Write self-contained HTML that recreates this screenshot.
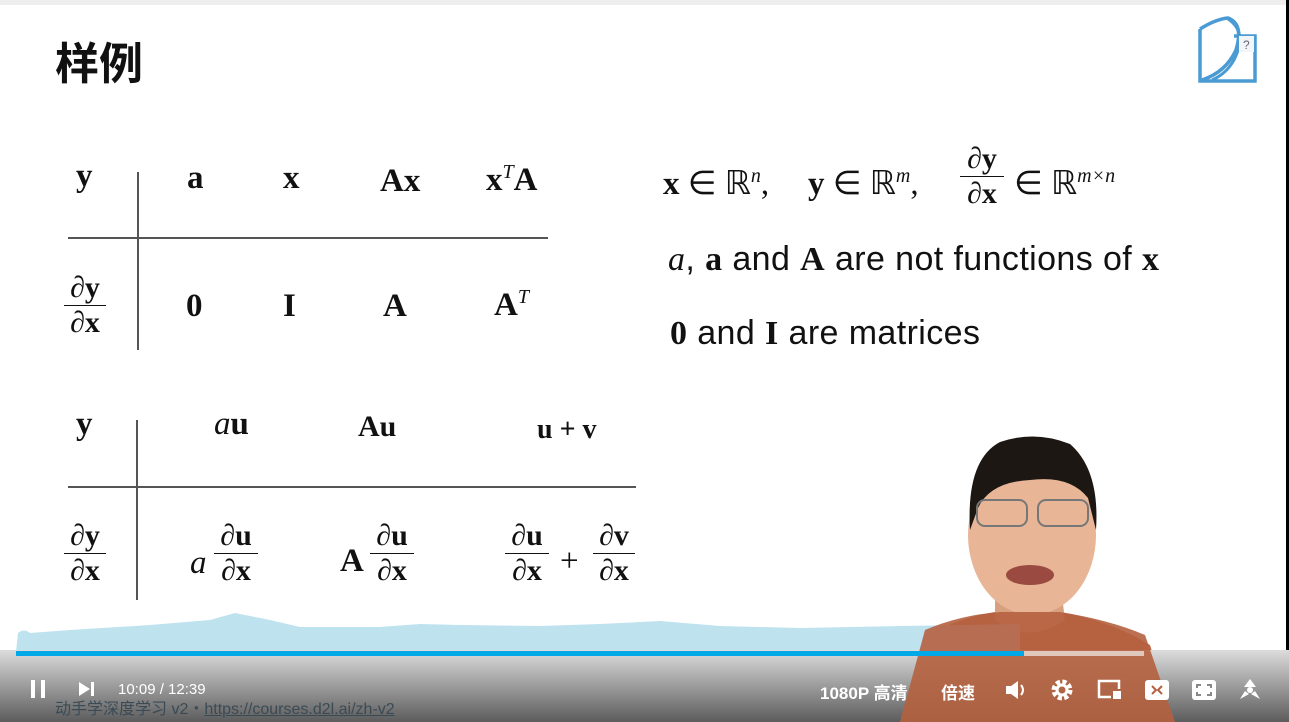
<!DOCTYPE html>
<html><head><meta charset="utf-8"><style>
body{margin:0;width:1289px;height:722px;overflow:hidden;background:#fff;position:relative;font-family:"Liberation Sans","Noto Sans CJK SC",sans-serif}
.a{position:absolute;white-space:nowrap}
.m{font-family:"Liberation Serif",serif;font-weight:bold;font-size:33px;color:#111}
.s{font-family:"Liberation Sans",sans-serif;font-size:34px;letter-spacing:0.4px;color:#111}
.i{font-style:italic;font-weight:normal}
.fr{position:absolute;text-align:center;font-family:"Liberation Serif",serif;font-weight:bold;font-size:30px;line-height:32px;color:#111}
.fr .l{border-top:1.5px solid #111;margin:1px 0}
.hl{position:absolute;height:1.5px;background:#555}
.vl{position:absolute;width:1.5px;background:#555}
</style></head><body>
<div class="a" style="left:0;top:0;width:1289px;height:5px;background:#eee"></div>
<div class="a" style="right:0;top:0;width:3px;height:722px;background:#000"></div>
<div class="a" style="left:55px;top:28px;font-size:44px;font-weight:bold;color:#111;font-family:'Noto Sans CJK SC',sans-serif">样例</div>
<svg class="a" style="left:1196px;top:14px" width="64" height="70" viewBox="0 0 64 70"><path d="M4 15 L4 67 L59 67 L59 22 L38 22" fill="none" stroke="#4a9bd4" stroke-width="3.5"/><path d="M4 15 Q20 5 32 4 Q48 10 40 36 Q30 58 6 66" fill="none" stroke="#4a9bd4" stroke-width="3.5"/><path d="M32 5 Q52 18 38 46 Q30 60 16 66" fill="none" stroke="#4a9bd4" stroke-width="3"/><rect x="43" y="22" width="15" height="16" fill="#f2f6f9"/><text x="47" y="35" font-size="12" fill="#667" font-family="Liberation Sans">?</text></svg>

<!-- table 1 -->
<div class="a m" style="left:76px;top:158px">y</div>
<div class="a m" style="left:187px;top:160px">a</div>
<div class="a m" style="left:283px;top:160px">x</div>
<div class="a m" style="left:380px;top:163px">Ax</div>
<div class="a m" style="left:486px;top:161px">x<sup style="font-size:20px;font-style:italic;font-weight:normal">T</sup>A</div>
<div class="hl" style="left:68px;top:237px;width:480px"></div>
<div class="vl" style="left:137px;top:172px;height:178px"></div>
<div class="fr" style="left:64px;top:272px;width:42px"><div><span class="i">∂</span>y</div><div class="l"></div><div><span class="i">∂</span>x</div></div>
<div class="a m" style="left:186px;top:288px">0</div>
<div class="a m" style="left:283px;top:288px">I</div>
<div class="a m" style="left:383px;top:288px">A</div>
<div class="a m" style="left:494px;top:286px">A<sup style="font-size:20px;font-style:italic;font-weight:normal">T</sup></div>

<!-- table 2 -->
<div class="a m" style="left:76px;top:406px">y</div>
<div class="a m" style="left:214px;top:406px"><span class="i">a</span>u</div>
<div class="a m" style="left:358px;top:410px;font-size:30px">Au</div>
<div class="a m" style="left:537px;top:414px;font-size:28px">u + v</div>
<div class="hl" style="left:68px;top:486px;width:568px"></div>
<div class="vl" style="left:136px;top:420px;height:180px"></div>
<div class="fr" style="left:64px;top:520px;width:42px"><div><span class="i">∂</span>y</div><div class="l"></div><div><span class="i">∂</span>x</div></div>
<div class="a m" style="left:190px;top:545px"><span class="i">a</span></div>
<div class="fr" style="left:214px;top:520px;width:44px"><div><span class="i">∂</span>u</div><div class="l"></div><div><span class="i">∂</span>x</div></div>
<div class="a m" style="left:340px;top:543px">A</div>
<div class="fr" style="left:370px;top:520px;width:44px"><div><span class="i">∂</span>u</div><div class="l"></div><div><span class="i">∂</span>x</div></div>
<div class="fr" style="left:505px;top:520px;width:44px"><div><span class="i">∂</span>u</div><div class="l"></div><div><span class="i">∂</span>x</div></div>
<div class="a m" style="left:560px;top:543px;font-weight:normal">+</div>
<div class="fr" style="left:593px;top:520px;width:42px"><div><span class="i">∂</span>v</div><div class="l"></div><div><span class="i">∂</span>x</div></div>

<!-- right text -->
<div class="a m" style="left:663px;top:163px;font-weight:normal"><b>x</b> ∈ ℝ<sup class="i" style="font-size:20px">n</sup>,</div>
<div class="a m" style="left:808px;top:163px;font-weight:normal"><b>y</b> ∈ ℝ<sup class="i" style="font-size:20px">m</sup>,</div>
<div class="fr" style="left:960px;top:143px;width:44px"><div><span class="i">∂</span>y</div><div class="l"></div><div><span class="i">∂</span>x</div></div>
<div class="a m" style="left:1014px;top:163px;font-weight:normal">∈ ℝ<sup class="i" style="font-size:20px">m×n</sup></div>
<div class="a s" style="left:668px;top:240px"><span style="font-family:'Liberation Serif',serif;font-style:italic">a</span>, <b style="font-family:'Liberation Serif',serif">a</b> and <b style="font-family:'Liberation Serif',serif">A</b> are not functions of <b style="font-family:'Liberation Serif',serif">x</b></div>
<div class="a s" style="left:670px;top:314px"><b style="font-family:'Liberation Serif',serif">0</b> and <b style="font-family:'Liberation Serif',serif">I</b> are matrices</div>

<!-- person -->
<svg class="a" style="left:880px;top:430px" width="300" height="292" viewBox="0 0 300 292">
<path d="M20 292 L40 210 Q80 185 130 180 L170 180 Q230 190 270 215 L295 292 Z" fill="#c0694a"/>
<path d="M115 150 L115 190 Q150 215 185 190 L180 150 Z" fill="#d9a080"/>
<ellipse cx="152" cy="105" rx="64" ry="80" fill="#e8b596"/>
<path d="M90 100 Q86 30 120 12 Q155 0 190 14 Q220 40 216 100 L208 68 Q190 45 150 50 Q110 52 98 78 Z" fill="#1d1714"/>
<rect x="97" y="70" width="50" height="26" rx="8" fill="none" stroke="#777" stroke-width="2"/>
<rect x="158" y="70" width="50" height="26" rx="8" fill="none" stroke="#777" stroke-width="2"/>
<ellipse cx="150" cy="145" rx="24" ry="10" fill="#9a4a40"/>
</svg>

<!-- waveform & bottom bar -->
<svg class="a" style="left:0;top:600px" width="1289" height="56" viewBox="0 0 1289 56"><path d="M16 52 L18 33 Q24 28 30 33 L70 30 L150 25 L210 20 L235 13 L250 16 L270 20 L300 27 L380 27 L420 24 L460 25 L540 26 L600 24 L660 21 L720 26 L800 28 L900 26 L960 25 L1020 24 L1020 52 Z" fill="#bfe2ef"/></svg>
<div class="a" style="left:0;top:650px;width:1289px;height:72px;background:linear-gradient(#dcdcdc,#5c5c5c)"></div>
<svg class="a" style="left:880px;top:600px" width="300" height="122" viewBox="0 0 300 122"><path d="M20 122 L45 30 Q80 15 120 12 L180 12 Q230 20 265 35 L295 122 Z" fill="#b5603f" opacity="0.9"/></svg>
<div class="a" style="left:16px;top:651px;width:1008px;height:5px;background:#00a8e8"></div>
<div class="a" style="left:1024px;top:651px;width:120px;height:5px;background:#e0c8bd"></div>
<div class="a" style="left:31px;top:680px;width:4px;height:18px;background:#fff"></div>
<div class="a" style="left:41px;top:680px;width:4px;height:18px;background:#fff"></div>
<svg class="a" style="left:78px;top:681px" width="18" height="16"><path d="M1 1 L12 8 L1 15Z" fill="#fff"/><rect x="13" y="1" width="3" height="14" fill="#fff"/></svg>
<div class="a" style="left:118px;top:681px;font-size:15px;color:#fff">10:09 / 12:39</div>
<div class="a" style="left:55px;top:695px;font-size:16px;color:#3a4a55">动手学深度学习 v2・<u>https://courses.d2l.ai/zh-v2</u></div>
<div class="a" style="left:820px;top:679px;font-size:17px;font-weight:bold;color:#fff">1080P 高清</div>
<div class="a" style="left:941px;top:679px;font-size:17px;font-weight:bold;color:#fff">倍速</div>
<svg class="a" style="left:1004px;top:679px" width="24" height="22"><path d="M2 7h5l7-5v18l-7-5H2z" fill="#fff"/><path d="M17 6q4 5 0 10" stroke="#fff" stroke-width="2" fill="none"/></svg>
<svg class="a" style="left:1050px;top:678px" width="24" height="24"><circle cx="12" cy="12" r="8" fill="none" stroke="#fff" stroke-width="5" stroke-dasharray="4 2.3"/><circle cx="12" cy="12" r="5" fill="none" stroke="#fff" stroke-width="3"/></svg>
<svg class="a" style="left:1097px;top:679px" width="26" height="22"><path d="M14 18H2V2h20v8" fill="none" stroke="#fff" stroke-width="2.5"/><rect x="16" y="12" width="8" height="8" fill="#fff"/></svg>
<svg class="a" style="left:1144px;top:679px" width="26" height="22"><rect x="1" y="1" width="24" height="20" rx="3" fill="#fff"/><path d="M8 7l4 4-4 4M18 7l-4 4 4 4" stroke="#b5603f" stroke-width="2" fill="none"/></svg>
<svg class="a" style="left:1191px;top:679px" width="26" height="22"><rect x="1" y="1" width="24" height="20" rx="3" fill="#fff"/><path d="M6 9V6h4M20 9V6h-4M6 13v3h4M20 13v3h-4" stroke="#888" stroke-width="2" fill="none"/></svg>
<svg class="a" style="left:1237px;top:677px" width="26" height="26"><circle cx="13" cy="13" r="3" fill="#fff"/><path d="M13 2l-6 8h12zM3 22l5-8 4 3zM23 22l-5-8-4 3z" fill="#fff"/></svg>
</body></html>
